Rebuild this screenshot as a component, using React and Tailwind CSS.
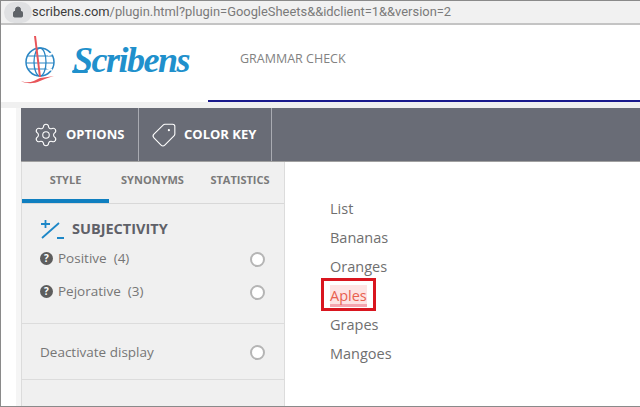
import React from 'react'
import { Settings, Tag, Lock } from 'lucide-react'

const fruits = ['List', 'Bananas', 'Oranges', 'Aples', 'Grapes', 'Mangoes']

const LogoMark = () => (
    <svg width="36" height="50" viewBox="0 0 36 50" fill="none">
        <circle cx="20" cy="27" r="14" stroke="#2a86c4" strokeWidth="1.5" />
        <ellipse cx="20" cy="27" rx="6" ry="14" stroke="#2a86c4" strokeWidth="1.3" />
        <path d="M7 21h26M6 28h28M8 34h24" stroke="#2a86c4" strokeWidth="1.2" />
        <path d="M28 20l5-2M27 33l5 2" stroke="#ffffff" strokeWidth="2" />
        <path d="M15 1l5 41" stroke="#e8555a" strokeWidth="2" />
        <path d="M1 46c8 3 13 0 19-3 5-1 10-1 14-2-6 2-10 3-14 5-6 3-14 3-19 0z" fill="#e8555a" />
    </svg>
)

const Radio = () => (
    <span className="w-[15px] h-[15px] rounded-full bg-white border-2 border-[#b5b5b5]" />
)

const Help = () => (
    <span className="w-[13px] h-[13px] rounded-full bg-[#5d5d5d] text-white text-[10px] leading-[13px] font-bold text-center">?</span>
)

const OptionRow = ({ label, count }) => (
    <div className="flex items-center justify-between pl-[18px] pr-[19px] h-[33px]">
        <div className="flex items-center gap-[5px] -mt-[2px]">
            <Help />
            <span className="text-[13.5px] text-[#767676]">{label}&nbsp; {count}</span>
        </div>
        <Radio />
    </div>
)

export default function App() {
    return (
        <div className="w-[640px] h-[407px] overflow-hidden flex flex-col bg-white border-t border-l border-b border-[#8a8a8a] font-['Open_Sans',sans-serif]">
            <div className="h-[24px] shrink-0 bg-[#f1f1f1] border-b-2 border-[#c4c4c4] flex items-center text-[12.9px] font-['Roboto',sans-serif]">
                <div className="w-[28px] h-[21px] ml-[3px] rounded-full bg-[#dfe0e2] flex items-center justify-center">
                    <Lock size={12} fill="#5f6368" stroke="#5f6368" />
                </div>
                <span className="text-[#3c3c3c]">scribens.com</span>
                <span className="text-[#7a7a7a]">/plugin.html?plugin=GoogleSheets&amp;&amp;idclient=1&amp;&amp;version=2</span>
            </div>

            <div className="h-[77px] shrink-0 flex items-end relative">
                <div className="flex items-center h-[77px] pl-[19px] pb-[8px]">
                    <LogoMark />
                    <span className="relative ml-[17px] w-[128px] text-[36px] tracking-[-1.5px] leading-none italic font-bold text-[#2090cc] font-['Liberation_Serif',serif]">
                        Scribens
                        <span className="absolute -left-[1px] bottom-[5px] w-[16px] h-[3px] rounded-full bg-[#2090cc]" />
                    </span>
                    <span className="ml-[39px] text-[12.5px] text-[#828282]">GRAMMAR CHECK</span>
                </div>
                <div className="absolute left-[207px] right-0 bottom-0 h-[2px] bg-[#1a1a8c]" />
            </div>

            <div className="h-[6px] shrink-0 bg-[#f0f0f0]" />

            <div className="flex-1 flex min-h-0">
                <div className="w-[15px] shrink-0 bg-white" />
                <div className="w-[5px] shrink-0 bg-[#f5f5f5]" />
                <div className="flex-1 flex flex-col min-h-0">
                    <div className="h-[54px] shrink-0 bg-[#696c76] flex border-b border-[#a0a0a0] text-white text-[13px] font-bold">
                        <div className="w-[118px] flex items-center gap-[7px] pl-[12px] border-r border-[#a9abb2]">
                            <Settings size={26} strokeWidth={1} />
                            <span>OPTIONS</span>
                        </div>
                        <div className="w-[133px] flex items-center gap-[7px] pl-[12px] border-r border-[#a9abb2]">
                            <Tag size={26} strokeWidth={1} className="-scale-x-100" />
                            <span>COLOR KEY</span>
                        </div>
                    </div>

                    <div className="flex-1 flex min-h-0">
                        <div className="w-[264px] shrink-0 bg-[#f0f0f0] border-l border-r border-[#dcdcdc] flex flex-col">
                            <div className="h-[42px] shrink-0 flex border-b border-[#d8d8d8] text-[11px] font-bold text-[#7a7a7a]">
                                <div className="w-[87px] flex items-center justify-center border-b-4 border-[#0f7fc0]">STYLE</div>
                                <div className="w-[87px] flex items-center justify-center pb-[4px]">SYNONYMS</div>
                                <div className="flex-1 flex items-center justify-center pb-[4px]">STATISTICS</div>
                            </div>
                            <div className="h-[120px] shrink-0 border-b border-[#dcdcdc] pt-[13px]">
                                <div className="flex items-center pl-[18px] gap-[8px] h-[24px] mb-[2px]">
                                    <svg width="24" height="22" viewBox="0 0 24 22" fill="none" stroke="#1d87c7" strokeWidth="1.8">
                                        <path d="M1 6h9M5.5 2v8M2 20L19 5M17 20h7" />
                                    </svg>
                                    <span className="text-[14.5px] font-bold text-[#5f6168]">SUBJECTIVITY</span>
                                </div>
                                <OptionRow label="Positive" count="(4)" />
                                <OptionRow label="Pejorative" count="(3)" />
                            </div>
                            <div className="h-[56px] shrink-0 border-b border-[#dcdcdc] flex items-center justify-between pl-[18px] pr-[19px] pt-[2px]">
                                <span className="text-[13.5px] text-[#767676]">Deactivate display</span>
                                <Radio />
                            </div>
                        </div>

                        <div className="pl-[45px] pt-[32px] flex flex-col text-[14.5px] text-[#6f6f6f] leading-[29px]">
                            {fruits.map((fruit) => (
                                <div key={fruit} className="h-[29px]">
                                    {fruit === 'Aples' ? (
                                        <span className="relative inline-block h-[22px] leading-[21px] mt-[4px] align-top text-[#e8604f] bg-[#fde4e4] border-b-[3px] border-[#f4a6b0]">
                                            {fruit}
                                            <span className="absolute -left-[9px] -top-[7px] w-[55px] h-[33px] border-[3px] border-[#d9161f]" />
                                        </span>
                                    ) : fruit}
                                </div>
                            ))}
                        </div>
                    </div>
                </div>
            </div>
        </div>
    )
}
